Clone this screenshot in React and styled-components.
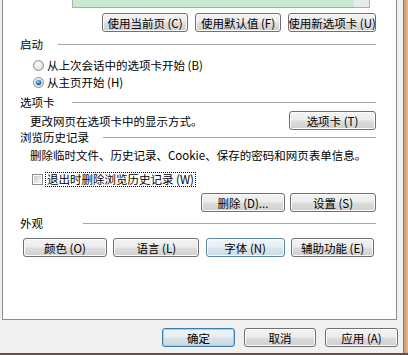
import React from 'react';
import styled, { createGlobalStyle, css } from 'styled-components';

const GlobalStyle = createGlobalStyle`
  html, body {
    margin: 0;
    padding: 0;
    background: #f0f0f0;
  }
  body {
    font-family: 'Noto Sans CJK SC', 'Liberation Sans', sans-serif;
    font-size: 11.5px;
    color: #000;
  }
`;

const Window = styled.div`
  width: 408px;
  height: 355px;
  box-sizing: border-box;
  display: flex;
  overflow: hidden;
  background: #f0f0f0;
  border-bottom: 2px solid #5e5348;
`;

const Main = styled.div`
  width: 403px;
  display: flex;
  flex-direction: column;
`;

const Frame = styled.div`
  width: 5px;
  box-sizing: border-box;
  border-left: 1px solid #8c7b6b;
  background: linear-gradient(to right, #c99b73, #e4b993);
`;

const Panel = styled.div`
  margin-left: 2px;
  width: 395px;
  height: 320px;
  box-sizing: border-box;
  background: #fff;
  border: 1px solid #898c95;
  border-top: none;
  padding: 0 20px 0 17px;
  display: flex;
  flex-direction: column;
`;

const ListBox = styled.div`
  margin-left: 52px;
  width: 298px;
  height: 8px;
  box-sizing: border-box;
  border: 1px solid #abadb3;
  border-top: none;
  display: flex;
`;

const ListFill = styled.div`
  flex: 1;
  background: #c9ead0;
`;

const ScrollTrack = styled.div`
  width: 15px;
  background: #e9ebe9;
`;

const Row = styled.div`
  display: flex;
  align-items: center;
  height: ${p => p.$h || 14}px;
  margin-top: ${p => p.$mt || 0}px;
  padding-left: ${p => p.$indent || 0}px;
  justify-content: ${p => (p.$end ? 'flex-end' : 'flex-start')};
  gap: ${p => p.$gap || 0}px;
  line-height: 14px;
  white-space: nowrap;
`;

const Label = styled.span`
  width: ${p => p.$w}px;
  flex-shrink: 0;
`;

const Rule = styled.div`
  flex: 1;
  height: 1px;
  background: #a5a5a5;
`;

const Text = styled.span`
  flex: 1;
`;

const FocusLabel = styled.span`
  outline: 1px dotted #000;
  outline-offset: 0;
  padding: 0 1px;
  line-height: 13px;
`;

const ButtonGrid = styled.div`
  display: grid;
  grid-template-columns: 84px 86px 79px 83px;
  justify-content: space-between;
  margin-top: ${p => p.$mt}px;
  padding: 0 2px 0 3px;
`;

const Button = styled.button`
  box-sizing: border-box;
  width: ${p => (p.$w ? `${p.$w}px` : 'auto')};
  height: 19px;
  padding: 0;
  margin: 0;
  font: inherit;
  font-size: 11.5px;
  color: #000;
  border: 1px solid #707070;
  border-radius: 3px;
  background: linear-gradient(#f3f3f3 0%, #ececec 48%, #dddddd 52%, #cfcfcf 100%);
  box-shadow: inset 0 0 0 1px #fbfbfb;
  display: flex;
  align-items: center;
  justify-content: center;
  white-space: nowrap;
  overflow: hidden;
  flex-shrink: 0;

  ${p => p.$tone === 'hover' && css`
    border-color: #5a86a8;
    background: linear-gradient(#f1f6fa 0%, #e7eff5 48%, #d9e5ee 52%, #ccdbe6 100%);
  `}

  ${p => p.$tone === 'default' && css`
    border-color: #3c7fb1;
    box-shadow: inset 0 0 0 1px #8fd3f5;
    background: linear-gradient(#f0f5f8 0%, #e7eef3 48%, #d8e2ea 52%, #cbd7e1 100%);
  `}
`;

const Footer = styled.div`
  display: flex;
  justify-content: flex-end;
  gap: 9px;
  margin-top: 8px;
  padding-right: 5px;
`;

const Mark = styled.svg`
  flex-shrink: 0;
  margin-right: 3px;
`;

const Radio = ({ checked }) => (
  <Mark width="11" height="11" viewBox="0 0 11 11">
    <defs>
      <radialGradient id={checked ? 'rg-on' : 'rg-off'} cx="0.4" cy="0.4" r="0.7">
        <stop offset="0" stopColor="#ffffff" />
        <stop offset="1" stopColor="#d4d4d4" />
      </radialGradient>
      <radialGradient id="rg-dot" cx="0.4" cy="0.35" r="0.7">
        <stop offset="0" stopColor="#9fdcf8" />
        <stop offset="0.6" stopColor="#2f7fc0" />
        <stop offset="1" stopColor="#134b7c" />
      </radialGradient>
    </defs>
    <circle cx="5.5" cy="5.5" r="5" fill={`url(#${checked ? 'rg-on' : 'rg-off'})`} stroke="#8e8f8f" />
    {checked && <circle cx="5.5" cy="5.5" r="2.8" fill="url(#rg-dot)" />}
  </Mark>
);

const Checkbox = () => (
  <Mark width="11" height="11" viewBox="0 0 11 11">
    <defs>
      <linearGradient id="cb" x1="0" y1="0" x2="1" y2="1">
        <stop offset="0" stopColor="#cbcbcb" />
        <stop offset="1" stopColor="#f6f6f6" />
      </linearGradient>
    </defs>
    <rect x="0.5" y="0.5" width="10" height="10" fill="#fff" stroke="#8e8f8f" />
    <rect x="2" y="2" width="7" height="7" fill="url(#cb)" />
  </Mark>
);

const Heading = ({ w, mt, children }) => (
  <Row $mt={mt}>
    <Label $w={w}>{children}</Label>
    <Rule />
  </Row>
);

export default function App() {
  return (
    <>
      <GlobalStyle />
      <Window>
        <Main>
          <Panel>
            <ListBox>
              <ListFill />
              <ScrollTrack />
            </ListBox>

            <Row $h={19} $mt={5} $end $gap={7}>
              <Button $w={86}>使用当前页 (C)</Button>
              <Button $w={86}>使用默认值 (F)</Button>
              <Button $w={88}>使用新选项卡 (U)</Button>
            </Row>

            <Heading w={38} mt={5}>启动</Heading>
            <Row $mt={7} $indent={13}>
              <Radio />
              从上次会话中的选项卡开始 (B)
            </Row>
            <Row $mt={3} $indent={13}>
              <Radio checked />
              从主页开始 (H)
            </Row>

            <Heading w={52} mt={6}>选项卡</Heading>
            <Row $h={19} $mt={2} $indent={10}>
              <Text>更改网页在选项卡中的显示方式。</Text>
              <Button $w={87}>选项卡 (T)</Button>
            </Row>

            <Heading w={83} mt={0}>浏览历史记录</Heading>
            <Row $mt={4} $indent={10}>
              删除临时文件、历史记录、Cookie、保存的密码和网页表单信息。
            </Row>
            <Row $mt={10} $indent={12}>
              <Checkbox />
              <FocusLabel>退出时删除浏览历史记录 (W)</FocusLabel>
            </Row>
            <Row $h={19} $mt={7} $end $gap={5}>
              <Button $w={84}>删除 (D)...</Button>
              <Button $w={86}>设置 (S)</Button>
            </Row>

            <Heading w={63} mt={4}>外观</Heading>
            <ButtonGrid $mt={8}>
              <Button>颜色 (O)</Button>
              <Button>语言 (L)</Button>
              <Button $tone="hover">字体 (N)</Button>
              <Button>辅助功能 (E)</Button>
            </ButtonGrid>
          </Panel>

          <Footer>
            <Button $w={73} $tone="default">确定</Button>
            <Button $w={72}>取消</Button>
            <Button $w={73}>应用 (A)</Button>
          </Footer>
        </Main>
        <Frame />
      </Window>
    </>
  );
}
